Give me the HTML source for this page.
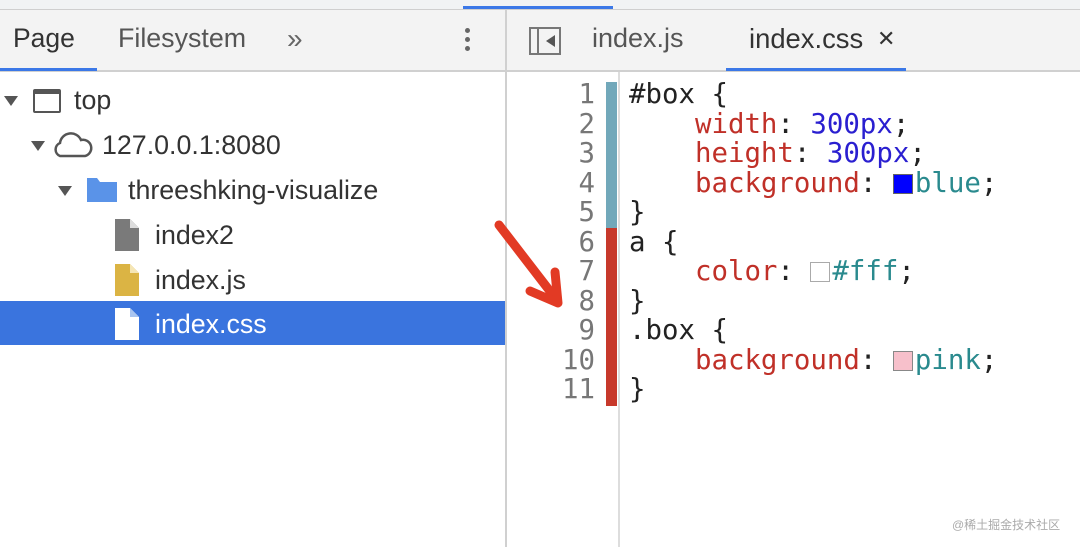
<!DOCTYPE html>
<html><head><meta charset="utf-8"><style>
*{margin:0;padding:0;box-sizing:border-box}
body{width:1080px;height:547px;background:#fff;position:relative;overflow:hidden;font-family:"Liberation Sans",sans-serif}
.abs{position:absolute}
.sans{font-family:"Liberation Sans",sans-serif}
.mono{font-family:"DejaVu Sans Mono","Liberation Mono",monospace;font-size:27.4px;white-space:pre;line-height:29.5px}
.tree{font-size:26.8px;color:#333;line-height:45px;white-space:nowrap}
.sw{display:inline-block;width:20px;height:20px;vertical-align:-2px;margin-right:2px}
</style></head><body>
<div class="abs" style="left:0;top:0;width:1080px;height:9px;background:#f1f3f4"></div>
<div class="abs" style="left:0;top:9px;width:1080px;height:1px;background:#cfcfcf"></div>
<div class="abs" style="left:463px;top:6px;width:150px;height:3px;background:#3b78e7"></div>
<div class="abs" style="left:0;top:10px;width:1080px;height:60px;background:#f3f3f3"></div>
<div class="abs" style="left:0;top:70px;width:1080px;height:2px;background:#d0d0d0"></div>
<div class="abs" style="left:0;top:68px;width:97px;height:3px;background:#3b78e7"></div>
<div class="abs" style="left:726px;top:68px;width:180px;height:3px;background:#3b78e7"></div>
<div class="abs" style="left:505px;top:10px;width:2px;height:537px;background:#d0d0d0"></div>
<div class="abs sans" style="left:13px;top:23px;font-size:26.5px;color:#333">Page</div>
<div class="abs sans" style="left:118px;top:23px;font-size:26.8px;color:#555">Filesystem</div>
<div class="abs sans" style="left:287px;top:23px;font-size:28px;color:#666">»</div>
<div class="abs" style="left:465px;top:28px;width:5px;height:5px;border-radius:50%;background:#666;box-shadow:0 9px 0 #666,0 18px 0 #666"></div>
<div class="abs" style="left:529px;top:27px;width:32px;height:28px;border:2px solid #777"></div>
<div class="abs" style="left:537px;top:27px;width:2px;height:28px;background:#777"></div>
<div class="abs" style="left:546px;top:35px;width:0;height:0;border-top:6px solid transparent;border-bottom:6px solid transparent;border-right:9px solid #555"></div>
<div class="abs sans" style="left:592px;top:23px;font-size:27px;color:#555">index.js</div>
<div class="abs sans" style="left:749px;top:23px;font-size:27.4px;color:#333">index.css</div>
<div class="abs sans" style="left:877px;top:26px;font-size:22px;color:#333">✕</div>
<!-- tree -->
<div class="abs" style="left:0;top:301px;width:505px;height:44px;background:#3a74de"></div>
<div class="abs" style="left:4px;top:96px;border-left:7px solid transparent;border-right:7px solid transparent;border-top:10px solid #555"></div>
<div class="abs" style="left:33px;top:89px;width:28px;height:24px;border:2.5px solid #555;border-top-width:5px;border-radius:2px"></div>
<div class="abs tree" style="left:74px;top:78px">top</div>
<div class="abs" style="left:31px;top:141px;border-left:7px solid transparent;border-right:7px solid transparent;border-top:10px solid #555"></div>
<svg class="abs" style="left:52px;top:131px" width="42" height="28" viewBox="0 0 42 28"><path d="M8 25 A7 7 0 0 1 8 12 A11 11 0 0 1 29 9 A8 8 0 0 1 33 25 Z" fill="none" stroke="#555" stroke-width="2.5"/></svg>
<div class="abs tree" style="left:102px;top:123px">127.0.0.1:8080</div>
<div class="abs" style="left:58px;top:186px;border-left:7px solid transparent;border-right:7px solid transparent;border-top:10px solid #555"></div>
<svg class="abs" style="left:85px;top:176px" width="34" height="28"><path d="M2 2 H12 L15 6 H32 V26 H2 Z" fill="#5a93e8"/></svg>
<div class="abs tree" style="left:128px;top:168px">threeshking-visualize</div>
<svg class="abs" style="left:113px;top:217px" width="28" height="36"><path d="M2 2 H17 L26 11 V34 H2 Z" fill="#7a7a7a"/><path d="M17 2 V11 H26" fill="#ddd"/></svg>
<div class="abs tree" style="left:155px;top:213px">index2</div>
<svg class="abs" style="left:113px;top:262px" width="28" height="36"><path d="M2 2 H17 L26 11 V34 H2 Z" fill="#dbb444"/><path d="M17 2 V11 H26" fill="#f5e6b5"/></svg>
<div class="abs tree" style="left:155px;top:258px">index.js</div>
<svg class="abs" style="left:113px;top:306px" width="28" height="36"><path d="M2 2 H17 L26 11 V34 H2 Z" fill="#fff"/><path d="M17 2 V11 H26" fill="#a8c4f0"/></svg>
<div class="abs tree" style="left:155px;top:302px;color:#fff">index.css</div>
<!-- editor -->
<div class="abs" style="left:618px;top:72px;width:2px;height:475px;background:#ddd"></div>
<div class="abs" style="left:606px;top:82px;width:11px;height:146px;background:#72a8ba"></div>
<div class="abs" style="left:606px;top:228px;width:11px;height:178px;background:#c7392b"></div>
<div class="abs mono" style="left:530px;top:80px;width:65px;text-align:right;color:#777">1
2
3
4
5
6
7
8
9
10
11</div>
<div class="abs mono" style="left:629px;top:80px;color:#222">#box {
    <span style="color:#c03028">width</span>: <span style="color:#2a1fd0">300px</span>;
    <span style="color:#c03028">height</span>: <span style="color:#2a1fd0">300px</span>;
    <span style="color:#c03028">background</span>: <span class="sw" style="background:#00f;border:1px solid #666"></span><span style="color:#2a8a8e">blue</span>;
}
a {
    <span style="color:#c03028">color</span>: <span class="sw" style="background:#fff;border:1.5px solid #aaa"></span><span style="color:#2a8a8e">#fff</span>;
}
.box {
    <span style="color:#c03028">background</span>: <span class="sw" style="background:#f7c0cb;border:1px solid #888"></span><span style="color:#2a8a8e">pink</span>;
}</div>
<svg class="abs" style="left:480px;top:210px" width="100" height="110"><g stroke="#e23a24" stroke-width="9" stroke-linecap="round" fill="none"><path d="M19 15 L76 89"/><path d="M50 81 L78 93 L75 62" stroke-linejoin="round"/></g></svg>
<div class="abs" style="left:952px;top:516px;font-size:12px;color:#aaa;font-family:'Liberation Sans','Noto Sans CJK SC',sans-serif">@稀土掘金技术社区</div>
</body></html>
